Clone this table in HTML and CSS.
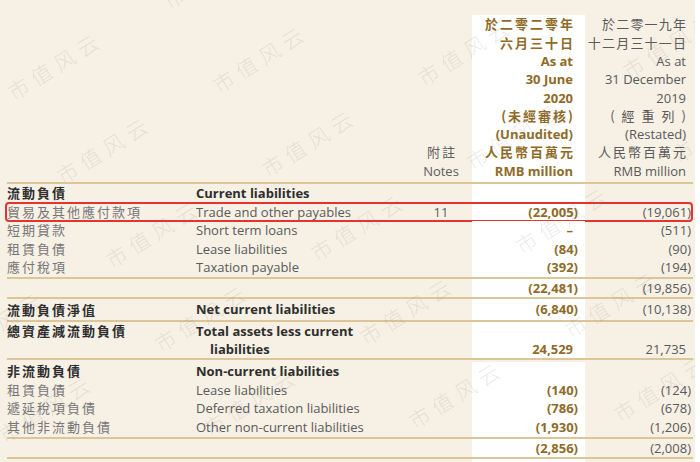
FILE: index.html
```html
<!DOCTYPE html>
<html lang="zh-Hant">
<head>
<meta charset="utf-8">
<title>Balance sheet extract</title>
<link rel="stylesheet" href="styles.css">
</head>
<body>
<div class="page">
  <div class="sheet">
    <div class="tbl">
      <div class="row head">
        <div class="c"></div>
        <div class="c"></div>
        <div class="c note"><div class="ln"><span class="zh">附註</span></div><div class="ln">Notes</div></div>
        <div class="c"></div>
        <div class="c cur">
          <div class="ln"><span class="zh">於二零二零年</span></div>
          <div class="ln"><span class="zh">六月三十日</span></div>
          <div class="ln">As at</div>
          <div class="ln">30 June</div>
          <div class="ln">2020</div>
          <div class="ln"><span class="zh">(未經審核)</span></div>
          <div class="ln">(Unaudited)</div>
          <div class="ln"><span class="zh">人民幣百萬元</span></div>
          <div class="ln">RMB million</div>
        </div>
        <div class="c pri">
          <div class="ln"><span class="zh zt">於二零一九年</span></div>
          <div class="ln"><span class="zh zt">十二月三十一日</span></div>
          <div class="ln">As at</div>
          <div class="ln">31 December</div>
          <div class="ln">2019</div>
          <div class="ln"><span class="zh spread">(經重列)</span></div>
          <div class="ln">(Restated)</div>
          <div class="ln"><span class="zh">人民幣百萬元</span></div>
          <div class="ln">RMB million</div>
        </div>
      </div>

      <div class="sec s1">
        <div class="row">
          <div class="c lz b">流動負債</div><div class="c le b">Current liabilities</div><div class="c note"></div><div class="c"></div><div class="c cur"></div><div class="c pri"></div>
        </div>
        <div class="row boxed">
          <div class="c lz">貿易及其他應付款項</div><div class="c le">Trade and other payables</div><div class="c note">11</div><div class="c"></div><div class="c cur">(22,005<span class="rp">)</span></div><div class="c pri">(19,061<span class="rp">)</span></div>
        </div>
        <div class="row">
          <div class="c lz">短期貸款</div><div class="c le">Short term loans</div><div class="c note"></div><div class="c"></div><div class="c cur">–</div><div class="c pri">(511<span class="rp">)</span></div>
        </div>
        <div class="row">
          <div class="c lz">租賃負債</div><div class="c le">Lease liabilities</div><div class="c note"></div><div class="c"></div><div class="c cur">(84<span class="rp">)</span></div><div class="c pri">(90<span class="rp">)</span></div>
        </div>
        <div class="row">
          <div class="c lz">應付稅項</div><div class="c le">Taxation payable</div><div class="c note"></div><div class="c"></div><div class="c cur">(392<span class="rp">)</span></div><div class="c pri">(194<span class="rp">)</span></div>
        </div>
      </div>

      <div class="sec s2">
        <div class="row">
          <div class="c"></div><div class="c"></div><div class="c note"></div><div class="c"></div><div class="c cur">(22,481<span class="rp">)</span></div><div class="c pri">(19,856<span class="rp">)</span></div>
        </div>
      </div>

      <div class="sec s3">
        <div class="row">
          <div class="c lz b">流動負債淨值</div><div class="c le b">Net current liabilities</div><div class="c note"></div><div class="c"></div><div class="c cur">(6,840<span class="rp">)</span></div><div class="c pri">(10,138<span class="rp">)</span></div>
        </div>
      </div>

      <div class="sec s4">
        <div class="row">
          <div class="c lz b">總資產減流動負債</div><div class="c le b hang">Total assets less current liabilities</div><div class="c note"></div><div class="c"></div><div class="c cur bot">24,529</div><div class="c pri bot">21,735</div>
        </div>
      </div>

      <div class="sec s5">
        <div class="row">
          <div class="c lz b">非流動負債</div><div class="c le b">Non-current liabilities</div><div class="c note"></div><div class="c"></div><div class="c cur"></div><div class="c pri"></div>
        </div>
        <div class="row">
          <div class="c lz">租賃負債</div><div class="c le">Lease liabilities</div><div class="c note"></div><div class="c"></div><div class="c cur">(140<span class="rp">)</span></div><div class="c pri">(124<span class="rp">)</span></div>
        </div>
        <div class="row">
          <div class="c lz">遞延稅項負債</div><div class="c le">Deferred taxation liabilities</div><div class="c note"></div><div class="c"></div><div class="c cur">(786<span class="rp">)</span></div><div class="c pri">(678<span class="rp">)</span></div>
        </div>
        <div class="row">
          <div class="c lz">其他非流動負債</div><div class="c le">Other non-current liabilities</div><div class="c note"></div><div class="c"></div><div class="c cur">(1,930<span class="rp">)</span></div><div class="c pri">(1,206<span class="rp">)</span></div>
        </div>
      </div>

      <div class="sec s6">
        <div class="row">
          <div class="c"></div><div class="c"></div><div class="c note"></div><div class="c"></div><div class="c cur">(2,856<span class="rp">)</span></div><div class="c pri">(2,008<span class="rp">)</span></div>
        </div>
      </div>

      <div class="row tail">
        <div class="c"></div><div class="c"></div><div class="c"></div><div class="c"></div><div class="c cur"></div><div class="c pri"></div>
      </div>
    </div>

    <div class="wm-layer" aria-hidden="true">
      <span class="wm w2">市值风云</span>
      <span class="wm w5">市值风云</span>
      <span class="wm w6">市值风云</span>
      <span class="wm w7">市值风云</span>
      <span class="wm w8">市值风云</span>
      <span class="wm w9">市值风云</span>
      <span class="wm w10">市值风云</span>
      <span class="wm w11">市值风云</span>
      <span class="wm w12">市值风云</span>
      <span class="wm w14">市值风云</span>
      <span class="wm w15">市值风云</span>
      <span class="wm w16">市值风云</span>
      <span class="wm w17">市值风云</span>
      <span class="wm w18">市值风云</span>
      <span class="wm w19">市值风云</span>
      <span class="wm w20">市值风云</span>
      <span class="wm w21">市值风云</span>
      <span class="wm w22">市值风云</span>
      <span class="wm w23">市值风云</span>
      <span class="wm w24">市值风云</span>
    </div>
  </div>
  <div class="edge"></div>
</div>
</body>
</html>
```

FILE: styles.css
```css
html, body {
  margin: 0;
  padding: 0;
}

body {
  width: 700px;
  height: 462px;
  overflow: hidden;
  background: #ffffff;
  font-family: "Open Sans", "Noto Sans CJK TC", sans-serif;
  font-size: 13px;
  color: #5e5e5e;
}

.page {
  display: flex;
  height: 462px;
}

.sheet {
  position: relative;
  width: 695px;
  flex: none;
  box-sizing: border-box;
  padding: 15px 0 0 7px;
  background: #f6f0e5;
  overflow: hidden;
}

.edge {
  flex: 1;
  background: #ffffff;
}

.tbl {
  width: 686px;
}

.row {
  display: grid;
  grid-template-columns: 189px 224px 42px 10px 113px 108px;
  position: relative;
}

.c {
  white-space: nowrap;
}

.zh {
  letter-spacing: 2px;
  margin-right: -2px;
  font-family: "Noto Sans CJK TC", sans-serif;
}

.zt {
  letter-spacing: 1.2px;
  margin-right: -1.2px;
}

.spread {
  letter-spacing: 7px;
  margin-right: -7px;
}

/* header */
.head {
  height: 167px;
  border-bottom: 2px solid #dcc597;
}

.head .c {
  display: flex;
  flex-direction: column;
  justify-content: flex-end;
  padding-bottom: 2px;
}

.ln {
  height: 18.3px;
  line-height: 18.3px;
}

.cur {
  background: #ffffff;
  text-align: right;
  padding-right: 12px;
  color: #8f6b28;
  font-weight: 700;
}

.pri {
  text-align: right;
  padding-right: 7px;
  color: #5a5a5a;
}

.note {
  text-align: center;
  color: #5e5e5e;
}

.rp {
  margin-right: -5px;
}

/* body labels */
.lz {
  font-family: "Noto Sans CJK TC", sans-serif;
  letter-spacing: 2px;
  color: #767676;
}

.le {
  color: #5a5a5a;
}

.b {
  font-weight: 700;
  color: #2e2e2e;
}

.sec {
  border-bottom: 2px solid #dcc597;
}

.s1 .row {
  height: 18.6px;
  line-height: 18.6px;
}

.s2 .row {
  height: 18px;
  line-height: 18px;
}

.s3 .row {
  height: 21px;
  line-height: 21px;
}

.s4 .row {
  height: 36px;
  line-height: 18px;
}

.hang {
  white-space: normal;
  padding-left: 14px;
  text-indent: -14px;
  padding-right: 40px;
}

.bot {
  display: flex;
  align-items: flex-end;
  justify-content: flex-end;
}

.s5 {
  padding-top: 2px;
}

.s5 .row {
  height: 18.75px;
  line-height: 18.75px;
}

.s6 .row {
  height: 18px;
  line-height: 18px;
}

.tail {
  height: 10px;
}

/* highlight box */
.boxed::after {
  content: "";
  position: absolute;
  top: -1px;
  bottom: -1px;
  left: -2px;
  right: 0;
  border: 2px solid #e5332f;
  border-radius: 4px;
  pointer-events: none;
}

/* watermark overlay */
.wm-layer {
  position: absolute;
  inset: 0;
  pointer-events: none;
}

.wm {
  position: absolute;
  font-family: "Noto Sans CJK SC", sans-serif;
  font-weight: 300;
  font-size: 21px;
  letter-spacing: 6px;
  white-space: nowrap;
  color: rgba(110, 105, 100, 0.15);
  transform: translate(-50%, -50%) rotate(-32deg);
}

.w2  { left: 211px; top: -26px; }
.w5  { left: 55px;  top: 65px; }
.w6  { left: 260px; top: 58px; }
.w7  { left: 465px; top: 51px; }
.w8  { left: 670px; top: 44px; }
.w9  { left: 104px; top: 149px; }
.w10 { left: 309px; top: 142px; }
.w11 { left: 514px; top: 135px; }
.w12 { left: 719px; top: 128px; }
.w14 { left: 153px; top: 233px; }
.w15 { left: 358px; top: 226px; }
.w16 { left: 563px; top: 219px; }
.w17 { left: -3px;  top: 324px; }
.w18 { left: 202px; top: 317px; }
.w19 { left: 407px; top: 310px; }
.w20 { left: 612px; top: 303px; }
.w21 { left: 46px;  top: 408px; }
.w22 { left: 251px; top: 401px; }
.w23 { left: 456px; top: 394px; }
.w24 { left: 661px; top: 387px; }
```
